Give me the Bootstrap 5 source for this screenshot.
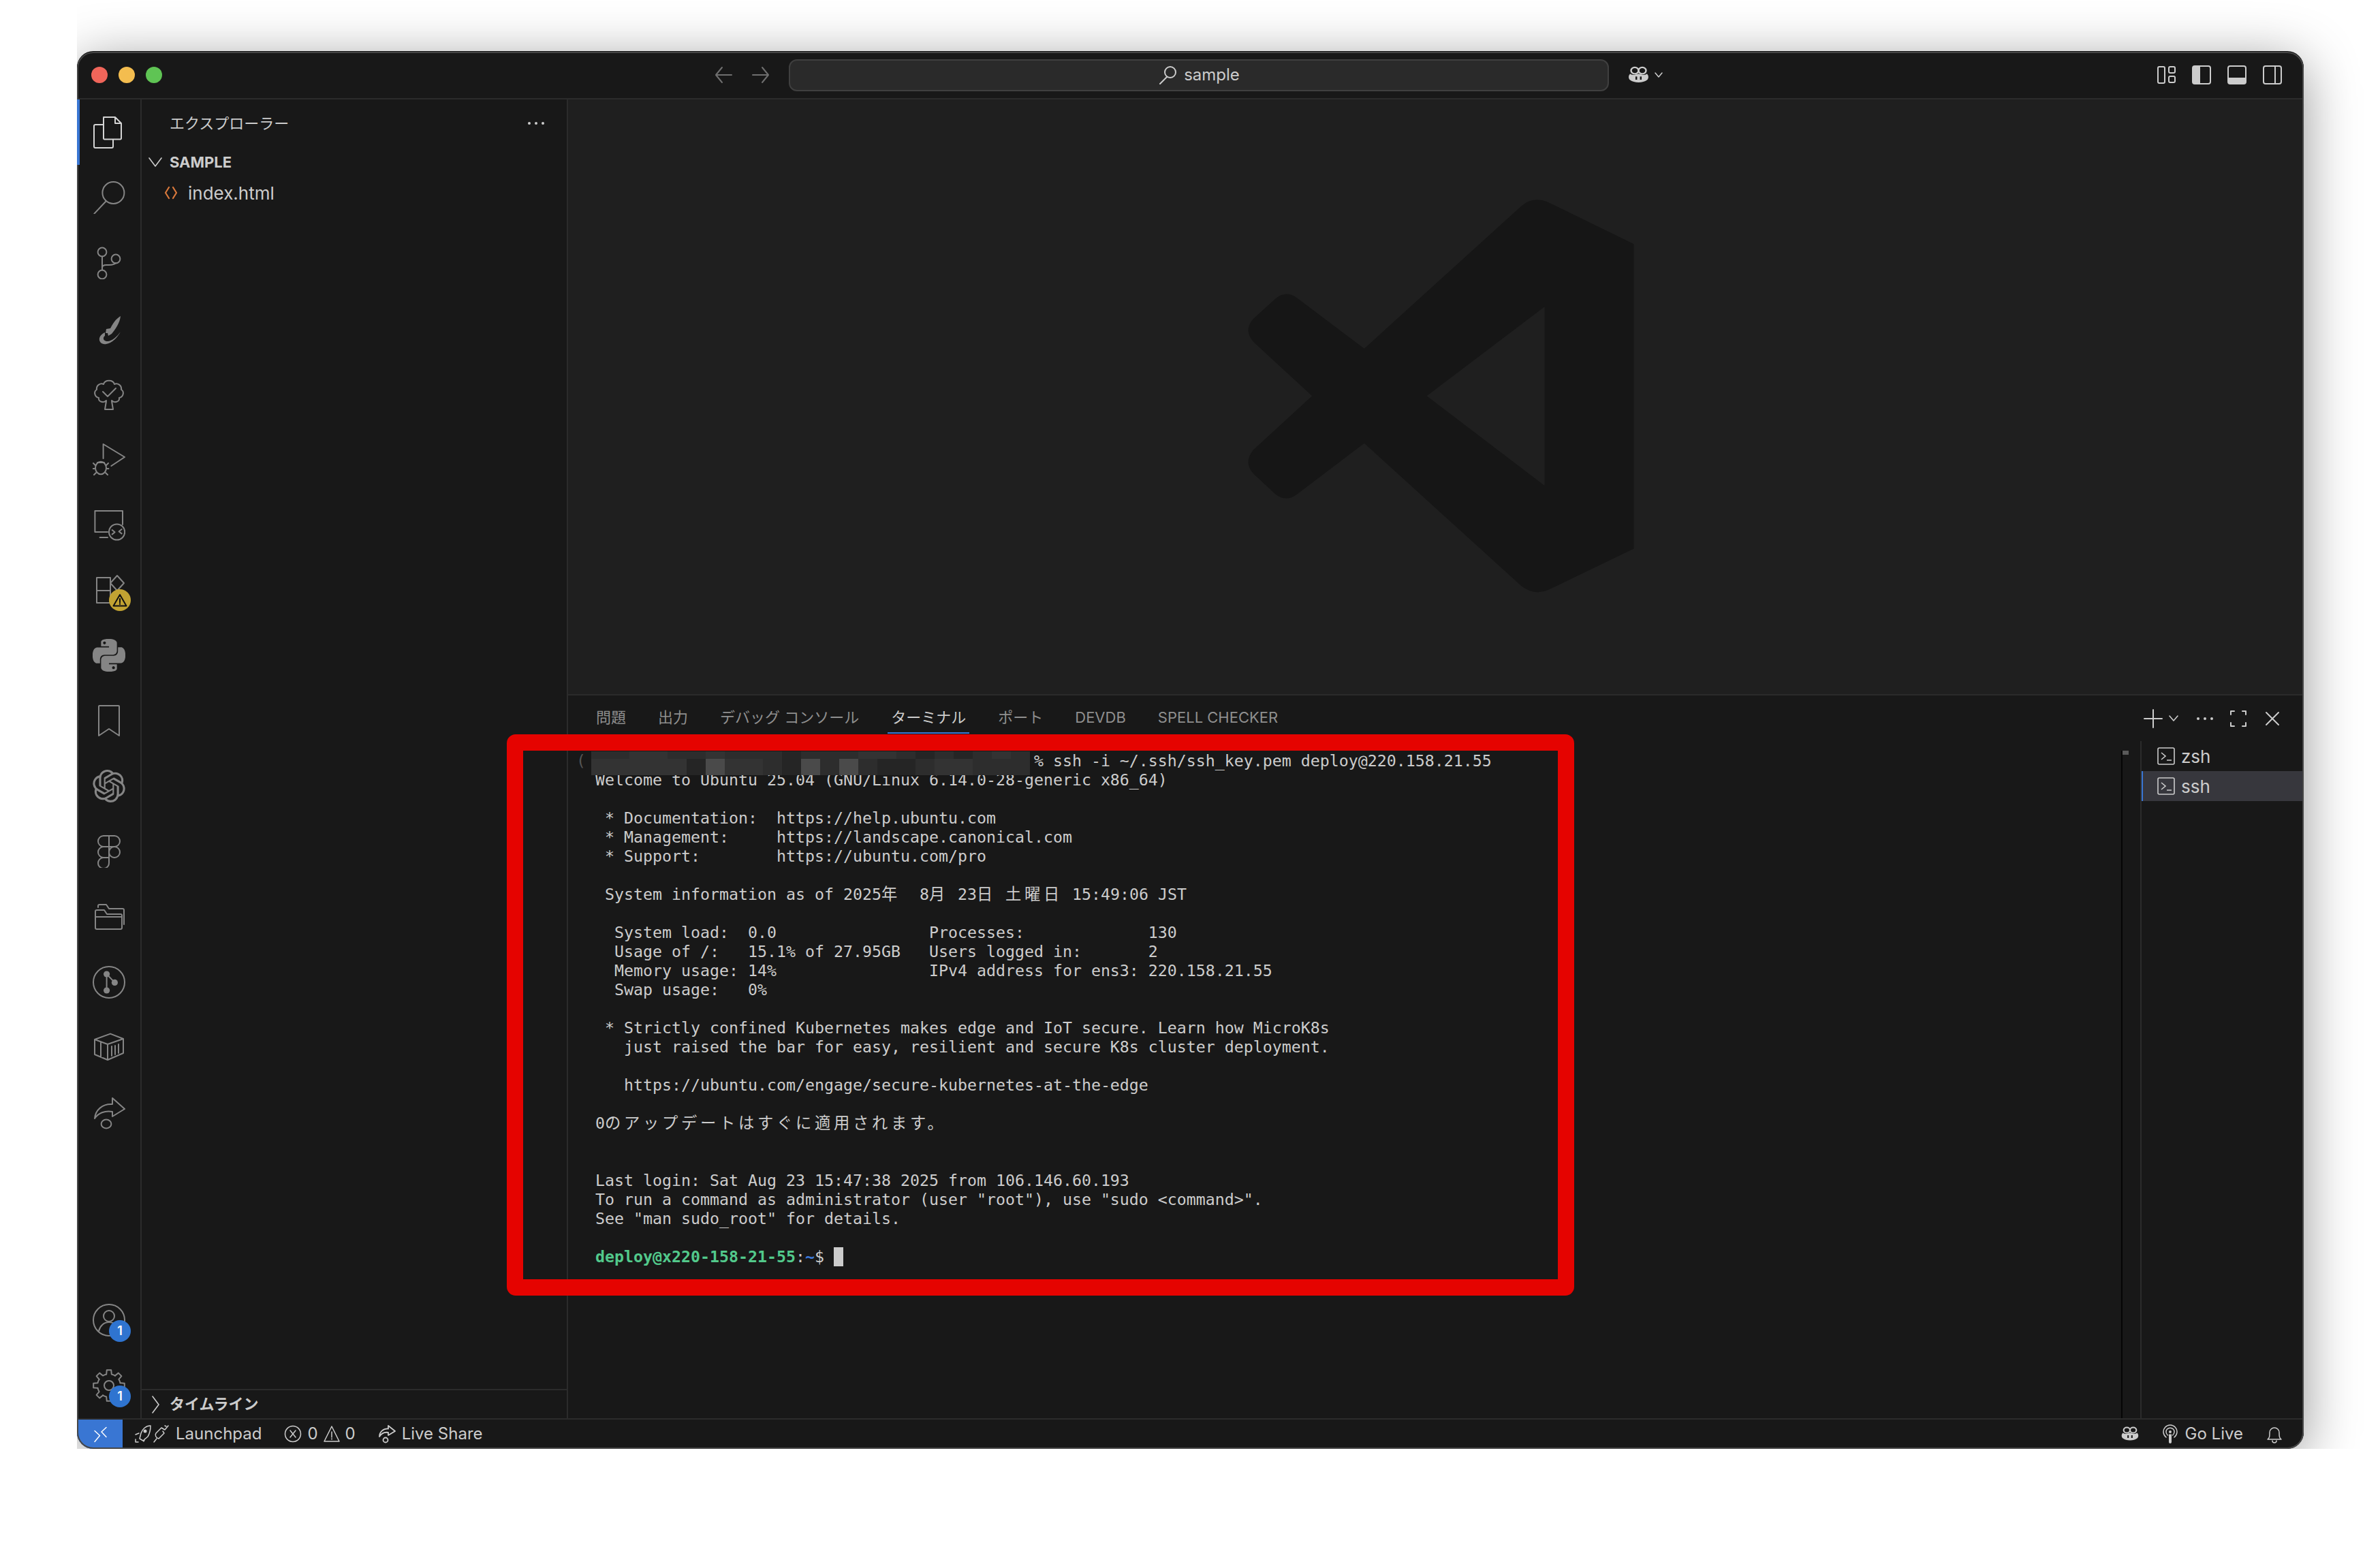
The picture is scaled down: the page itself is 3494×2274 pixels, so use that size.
<!DOCTYPE html>
<html lang="ja">
<head>
<meta charset="utf-8">
<title>sample - Visual Studio Code</title>
<link rel="stylesheet" href="https://cdn.jsdelivr.net/npm/bootstrap@5.3.0/dist/css/bootstrap.min.css">
<style>
body{margin:0;background:#fff;width:3494px;height:2274px;overflow:hidden;font-family:Inter,"Noto Sans CJK JP",sans-serif;color:#ccc;}
.shot{margin-left:113px;height:2127px;padding-top:76px;overflow:hidden;}
.vswin{width:3269px;height:2051px;border-radius:24px;overflow:hidden;background:#181818;box-shadow:0 -1px 0 #111,0 14px 80px rgba(0,0,0,.42);}
.vswin::after{content:"";position:absolute;inset:0;border:2px solid #464646;border-radius:24px;pointer-events:none;z-index:1;}
.ic{fill:none;stroke:currentColor;stroke-width:1;stroke-linejoin:round;stroke-linecap:round;flex:none;display:block;}
.fillic{fill:currentColor;stroke:none;}
.shrink-h{min-height:0}
.shrink-w{min-width:0}
.file-ic{color:#d9793c}
.titlebar{height:70px;border-bottom:2px solid #2b2b2b;flex:none;}
.tb-left{width:1045px;padding-left:21px;}
.tdot{width:24px;height:24px;border-radius:50%;}
.dot-r{background:#f0655a}.dot-y{background:#f4bd4f}.dot-g{background:#5fc454}
.dots{gap:16px}
.nav-arrows{gap:27px;margin-right:27px;color:#6f6f6f}
.searchbox{width:1204px;height:47px;background:#2a2a2a;border:2px solid #3f3f3f;border-radius:12px;font-size:24px;gap:10px;color:#ccc;}
.tb-right{padding:0 32px 0 27px;}
.rt-icons{gap:24px}
.copilot-wrap{gap:6px;color:#ccc}
.activity{width:95px;border-right:2px solid #2b2b2b;color:#858585;flex:none;}
.act-item{height:96px;width:93px;}
.act-active{color:#d4d4d4;}
.act-active::before{content:"";position:absolute;left:0;top:0;bottom:0;width:4px;background:#3976d3;z-index:2;}
.act-badge{position:absolute;left:47px;top:48px;width:32px;height:32px;border-radius:50%;background:#2f74d0;color:#fff;font-size:18px;font-weight:600;line-height:1;}
.act-warn{background:#c2a332;top:47px;color:#111;}
.sidebar{width:626px;border-right:2px solid #2b2b2b;flex:none;}
.side-head{height:70px;padding-left:41px;padding-right:32px;font-size:22px;}
.side-row{height:44px;font-size:26px;}
.side-sec{font-size:22px;font-weight:700;padding-left:10px;gap:11px;}
.side-file{padding-left:33px;gap:15px;margin-top:1px;}
.side-time{height:43px;border-top:2px solid #2b2b2b;font-size:22px;font-weight:700;padding-left:14px;gap:13px;}
.editor-area{height:875px;background:#1f1f1f;border-bottom:2px solid #2b2b2b;padding:0 0 6px 6px;flex:none;}
.panel-head{height:67px;padding:8px 32px 0 41px;flex:none;}
.ptabs{gap:47px;font-size:22px;color:#8f8f8f;}
.ptab{height:48px;margin:0 -5px;padding:2px 5px 0;border-bottom:2px solid transparent;}
.ptab-on{color:#ccc;border-bottom-color:#3976d3;}
.pacts{gap:22px;color:#ccc;margin-top:-8px}
.pact-chev{margin-left:-14px}
.pact-dots{margin-left:3px}
.term{margin-top:14px;border-right:2px solid #050505;min-width:0;}
.term-pre{padding:1px 0 0 40px;font-family:"DejaVu Sans Mono",monospace;font-size:23.25px;line-height:28px;color:#ccc;overflow:hidden;height:100%;}
.tln{height:28px;white-space:pre;}
.term-cjk{font-family:"Noto Sans CJK JP",sans-serif;letter-spacing:4.7px;line-height:0;font-size:23.3px;}
.term-green{color:#52c98b;font-weight:700}
.term-blue{color:#3b78d8;font-weight:700}
.term-cur{display:inline-block;width:14px;height:28px;background:#ccc;vertical-align:top;}
.term-lead{display:inline-block;width:28px;margin-left:-28px;color:#555;}
.term-mask{position:absolute;left:34px;top:1px;display:block;}
.term-rule{position:absolute;right:-11px;top:0;width:9px;height:6px;background:#5a5a5a;}
.ruler-gap{width:26px;flex:none;}
.tlist{width:240px;border-left:2px solid #2b2b2b;flex:none;font-size:26px;}
.tl-row{height:44px;padding-left:23px;gap:9px;}
.tl-on{background:#37373d;box-shadow:inset 2px 0 0 #3976d3;}
.statusbar{height:45px;border-top:2px solid #2b2b2b;padding-bottom:2px;font-size:24px;flex:none;}
.st-remote{width:67px;align-self:stretch;margin-bottom:-2px;background:#3976d3;color:#fff;}
.st-left{gap:33px;padding-left:17px}
.st-item{gap:9px}
.st-counts{gap:8px}
.st-golive{gap:11px}
.st-right{gap:34px;padding-right:31px}
.redframe{position:absolute;left:631px;top:1002px;width:1567px;height:824px;border:24px solid #e50300;border-radius:13px;}
</style>
</head>
<body>
<svg width="0" height="0" class="position-absolute">
  <defs>
    <symbol id="cop" viewBox="0 0 24 24" preserveAspectRatio="none">
      <circle cx="8" cy="6.500" r="4" fill="none" stroke="currentColor" stroke-width="1.800"/>
      <circle cx="16" cy="6.500" r="4" fill="none" stroke="currentColor" stroke-width="1.800"/>
      <path fill="currentColor" d="M3 10.500C1 13 1 16.500 3 18.500 7 22.500 17 22.500 21 18.500 23 16.500 23 13 21 10.500 19 12.500 16 12 12 10.500 8 12 5 12.500 3 10.500Z"/>
      <rect x="8.700" y="14" width="1.800" height="4" fill="#181818"/>
      <rect x="13.500" y="14" width="1.800" height="4" fill="#181818"/>
    </symbol>
    <symbol id="tprompt" viewBox="0 0 26 26">
      <rect x="1" y="1" width="24" height="24" rx="2" fill="none" stroke="currentColor" stroke-width="1.600"/>
      <path d="M6 8l6 5-6 5M14 19h7" fill="none" stroke="currentColor" stroke-width="1.600"/>
    </symbol>
    <path id="gt" d="M-1.91-8.28L-1.6-11.39H1.6L1.91-8.28A8.5 8.5 0 0 1 4.5-7.21"/>
  </defs>
</svg>
<div class="shot">
<div class="vswin position-relative d-flex flex-column">

  <div class="titlebar d-flex align-items-center">
    <div class="tb-left d-flex align-items-center">
      <div class="dots d-flex"><span class="tdot dot-r"></span><span class="tdot dot-y"></span><span class="tdot dot-g"></span></div>
      <div class="nav-arrows d-flex ms-auto">
        <svg class="ic" width="28" height="28" viewBox="0 0 28 28"><path stroke-width="2" d="M26 14H3M12 3L3 14l9 11"/></svg>
        <svg class="ic" width="28" height="28" viewBox="0 0 28 28"><path stroke-width="2" d="M2 14h23M16 3l9 11-9 11"/></svg>
      </div>
    </div>
    <div class="searchbox d-flex align-items-center justify-content-center">
      <svg class="ic" width="28" height="28" viewBox="0 0 28 28"><circle stroke-width="2" cx="18" cy="10" r="8"/><path stroke-width="2" d="M13 17L3 27"/></svg>
      <span>sample</span>
    </div>
    <div class="tb-right flex-grow-1 d-flex align-items-center">
      <div class="copilot-wrap d-flex align-items-center">
        <svg width="33" height="28"><use href="#cop"/></svg>
        <svg class="ic" width="14" height="10" viewBox="0 0 14 10"><path stroke-width="1.500" d="M2 2l5 6 5-6"/></svg>
      </div>
      <div class="rt-icons d-flex ms-auto">
        <svg class="ic" width="28" height="28" viewBox="-1 0 28 28"><g stroke-width="2"><rect x="1" y="2" width="10" height="24" rx="2"/><rect x="17" y="2" width="9" height="9" rx="2"/><rect x="17" y="16" width="9" height="9" rx="2"/></g></svg>
        <svg class="ic" width="28" height="28" viewBox="0 0 28 28"><rect stroke-width="2" x="1" y="1" width="26" height="26" rx="3"/><path class="fillic" d="M1 4a3 3 0 0 1 3-3h8v26H4a3 3 0 0 1-3-3z"/></svg>
        <svg class="ic" width="28" height="28" viewBox="0 0 28 28"><rect stroke-width="2" x="1" y="1" width="26" height="26" rx="3"/><path class="fillic" d="M1 18h26v6a3 3 0 0 1-3 3H4a3 3 0 0 1-3-3z"/></svg>
        <svg class="ic" width="28" height="28" viewBox="0 0 28 28"><rect stroke-width="2" x="1" y="1" width="26" height="26" rx="3"/><path stroke-width="2" d="M18 1v26"/></svg>
      </div>
    </div>
  </div>

  <div class="d-flex flex-grow-1 shrink-h">
    <nav class="activity d-flex flex-column justify-content-between">
      <div>
        <div class="act-item act-active position-relative d-flex align-items-center justify-content-center">
          <svg class="ic" width="48" height="48" viewBox="0 0 24 24"><path d="M8 1h8.500L21 5.500V16.500a.7.7 0 0 1-.7.7H8.700a.7.7 0 0 1-.7-.7V1.700A.7.7 0 0 1 8.700 1zM16.500 1v4.500H21M8 6.500H2a1 1 0 0 0-1 1V22.500a1 1 0 0 0 1 1H14a1 1 0 0 0 1-1V17.200"/></svg>
        </div>
        <div class="act-item d-flex align-items-center justify-content-center">
          <svg class="ic" width="48" height="48" viewBox="0 0 24 24"><circle cx="15.200" cy="8.500" r="8"/><path d="M9.500 15L1.200 23.800"/></svg>
        </div>
        <div class="act-item d-flex align-items-center justify-content-center">
          <svg class="ic" width="48" height="48" viewBox="0 0 24 24"><circle cx="7" cy="4" r="3.200"/><circle cx="17" cy="9" r="3.200"/><circle cx="7" cy="20.500" r="3.200"/><path d="M7 7.200V17.300M7 15.500c0-1.500 1-2 3-2h2c3 0 5-1 5-1.500"/></svg>
        </div>
        <div class="act-item d-flex align-items-center justify-content-center">
          <svg class="ic fillic" width="48" height="48" viewBox="0 0 24 24"><path d="M20.500 3C17 5 14.500 9 13 12L10 12.500 9.500 15.500 11 15.500 11.500 17.500 14 16C16.500 13 20 8 20.500 3Z"/><path d="M9 15C2.500 18 4.500 24.500 10 23.500 14 23 18 19 20.500 14.500 18 18 14 21.500 11 21.500 8 21.500 7 19 9 17.500Z"/></svg>
        </div>
        <div class="act-item d-flex align-items-center justify-content-center">
          <svg class="ic" width="48" height="48" viewBox="0 0 24 24"><path d="M10 17.500L9 23.500H15L14 17.500M10 17C8 19 4 18 4.500 15 1.500 14.500.5 10.500 3 9 2.500 5.500 6 4 8 5 9 1.500 15 1.500 16 5 18 4 21.500 5.500 21 9 23.500 10.500 22.500 14.500 19.500 15 20 18 16 19 14 17M7.500 10.500L11 14 17 8"/></svg>
        </div>
        <div class="act-item d-flex align-items-center justify-content-center">
          <svg class="ic" width="48" height="48" viewBox="0 0 24 24"><path d="M7.800 11.500V1L23.500 10.500 13.700 17"/><ellipse cx="6" cy="18.500" rx="4" ry="4.600"/><path d="M2 16.500L.5 15M10 16.500L11.500 15M1.500 19H.3M10.500 19H11.700M2.500 22L1 23.500M9.500 22L11 23.500M3.500 14.500h5"/></svg>
        </div>
        <div class="act-item d-flex align-items-center justify-content-center">
          <svg class="ic" width="48" height="48" viewBox="0 0 24 24"><path d="M22 12V2H1.700V17.500H11M5.300 21.500H11"/><circle cx="17.800" cy="17.500" r="5.800"/><path d="M14.300 16l2 1.600-2 1.600M21.300 15.500l-2 1.600 2 1.600"/></svg>
        </div>
        <div class="act-item position-relative d-flex align-items-center justify-content-center">
          <svg class="ic" width="48" height="48" viewBox="0 0 24 24"><path d="M3 3H13V21.500H3ZM3 12.500H13M13 7l5-5.500L23 7l-5 5.500Z"/></svg>
          <span class="act-badge act-warn d-flex align-items-center justify-content-center"><svg class="ic" width="22" height="20" viewBox="0 0 22 20"><path stroke-width="2" d="M11 2L1.500 18.500h19zM11 8v5.500M11 15.500v.5"/></svg></span>
        </div>
        <div class="act-item d-flex align-items-center justify-content-center">
          <svg class="ic fillic" width="48" height="48" viewBox="0 0 24 24"><path d="M14.25.18l.9.2.73.26.59.3.45.32.34.34.25.34.16.33.1.3.04.26.02.2-.01.13V8.5l-.05.63-.13.55-.21.46-.26.38-.3.31-.33.25-.35.19-.35.14-.33.1-.3.07-.26.04-.21.02H8.77l-.69.05-.59.14-.5.22-.41.27-.33.32-.27.35-.2.36-.15.37-.1.35-.07.32-.04.27-.02.21v3.06H3.17l-.21-.03-.28-.07-.32-.12-.35-.18-.36-.26-.36-.36-.35-.46-.32-.59-.28-.73-.21-.88-.14-1.05-.05-1.23.06-1.22.16-1.04.24-.87.32-.71.36-.57.4-.44.42-.33.42-.24.4-.16.36-.1.32-.05.24-.01h.16l.06.01h8.16v-.83H6.18l-.01-2.75-.02-.37.05-.34.11-.31.17-.28.25-.26.31-.23.38-.2.44-.18.51-.15.58-.12.64-.1.71-.06.77-.04.84-.02 1.27.05zm-6.3 1.98l-.23.33-.08.41.08.41.23.34.33.22.41.09.41-.09.33-.22.23-.34.08-.41-.08-.41-.23-.33-.33-.22-.41-.09-.41.09zm13.09 3.95l.28.06.32.12.35.18.36.27.36.35.35.47.32.59.28.73.21.88.14 1.04.05 1.23-.06 1.23-.16 1.04-.24.86-.32.71-.36.57-.4.45-.42.33-.42.24-.4.16-.36.09-.32.05-.24.02-.16-.01h-8.22v.82h5.84l.01 2.76.02.36-.05.34-.11.31-.17.29-.25.25-.31.24-.38.2-.44.17-.51.15-.58.13-.64.09-.71.07-.77.04-.84.01-1.27-.04-1.07-.14-.9-.2-.73-.25-.59-.3-.45-.33-.34-.34-.25-.34-.16-.33-.1-.3-.04-.25-.02-.2.01-.13v-5.34l.05-.64.13-.54.21-.46.26-.38.3-.32.33-.24.35-.2.35-.14.33-.1.3-.06.26-.04.21-.02.13-.01h5.84l.69-.05.59-.14.5-.21.41-.28.33-.32.27-.35.2-.36.15-.36.1-.35.07-.32.04-.28.02-.21V6.07h2.09l.14.01zm-6.47 14.25l-.23.33-.08.41.08.41.23.33.33.23.41.08.41-.08.33-.23.23-.33.08-.41-.08-.41-.23-.33-.33-.23-.41-.08-.41.08z"/></svg>
        </div>
        <div class="act-item d-flex align-items-center justify-content-center">
          <svg class="ic" width="48" height="48" viewBox="0 0 24 24"><path d="M5 1H19a.5.500 0 0 1 .5.5V23L12 18 4.500 23V1.500A.5.500 0 0 1 5 1Z"/></svg>
        </div>
        <div class="act-item d-flex align-items-center justify-content-center">
          <svg class="ic fillic" width="48" height="48" viewBox="0 0 24 24"><path d="M22.2819 9.8211a5.9847 5.9847 0 0 0-.5157-4.9108 6.0462 6.0462 0 0 0-6.5098-2.9A6.0651 6.0651 0 0 0 4.9807 4.1818a5.9847 5.9847 0 0 0-3.9977 2.9 6.0462 6.0462 0 0 0 .7427 7.0966 5.98 5.98 0 0 0 .511 4.9107 6.051 6.051 0 0 0 6.5146 2.9001A5.9847 5.9847 0 0 0 13.2599 24a6.0557 6.0557 0 0 0 5.7718-4.2058 5.9894 5.9894 0 0 0 3.9977-2.9001 6.0557 6.0557 0 0 0-.7475-7.0729zm-9.022 12.6081a4.4755 4.4755 0 0 1-2.8764-1.0408l.1419-.0804 4.7783-2.7582a.7948.7948 0 0 0 .3927-.6813v-6.7369l2.02 1.1686a.071.071 0 0 1 .038.052v5.5826a4.504 4.504 0 0 1-4.4945 4.4944zm-9.6607-4.1254a4.4708 4.4708 0 0 1-.5346-3.0137l.142.0852 4.783 2.7582a.7712.7712 0 0 0 .7806 0l5.8428-3.3685v2.3324a.0804.0804 0 0 1-.0332.0615L9.74 19.9502a4.4992 4.4992 0 0 1-6.1408-1.6464zM2.3408 7.8956a4.485 4.485 0 0 1 2.3655-1.9728V11.6a.7664.7664 0 0 0 .3879.6765l5.8144 3.3543-2.0201 1.1685a.0757.0757 0 0 1-.071 0l-4.8303-2.7865A4.504 4.504 0 0 1 2.3408 7.872zm16.5963 3.8558L13.1038 8.364 15.1192 7.2a.0757.0757 0 0 1 .071 0l4.8303 2.7913a4.4944 4.4944 0 0 1-.6765 8.1042v-5.6772a.79.79 0 0 0-.407-.667zm2.0107-3.0231l-.142-.0852-4.7735-2.7818a.7759.7759 0 0 0-.7854 0L9.409 9.2297V6.8974a.0662.0662 0 0 1 .0284-.0615l4.8303-2.7866a4.4992 4.4992 0 0 1 6.6802 4.66zM8.3065 12.863l-2.02-1.1638a.0804.0804 0 0 1-.038-.0567V6.0742a4.4992 4.4992 0 0 1 7.3757-3.4537l-.142.0805L8.704 5.459a.7948.7948 0 0 0-.3927.6813zm1.0976-2.3654l2.602-1.4998 2.6069 1.4998v2.9994l-2.5974 1.4997-2.6067-1.4997Z"/></svg>
        </div>
        <div class="act-item d-flex align-items-center justify-content-center">
          <svg class="ic" width="48" height="48" viewBox="0 0 24 24"><path d="M12 .5H8a4 4 0 0 0 0 8H12ZM12 .5H16a4 4 0 0 1 0 8H12ZM12 8.500H8a4 4 0 0 0 0 8H12ZM12 16.500H8a4 4 0 1 0 4 4Z"/><circle cx="16" cy="12.500" r="4"/></svg>
        </div>
        <div class="act-item d-flex align-items-center justify-content-center">
          <svg class="ic" width="48" height="48" viewBox="0 0 24 24"><path d="M4 5V4a1 1 0 0 1 1-1H10L12 6H22a1 1 0 0 1 1 1V17.500M2 12H21M2 19.500V8a1 1 0 0 1 1-1H8.500L10.500 10H20.500a1 1 0 0 1 1 1V20a1 1 0 0 1-1 1H3a1 1 0 0 1-1-1Z"/></svg>
        </div>
        <div class="act-item d-flex align-items-center justify-content-center">
          <svg class="ic" width="48" height="48" viewBox="0 0 24 24"><circle cx="12" cy="12" r="11.500"/><path d="M10.300 6V18M10.300 6L16.200 12.200"/><g class="fillic"><circle cx="10.300" cy="6" r="2.300"/><circle cx="16.200" cy="12.200" r="2.300"/><circle cx="10.300" cy="18" r="2.300"/></g></svg>
        </div>
        <div class="act-item d-flex align-items-center justify-content-center">
          <svg class="ic" width="48" height="48" viewBox="0 0 24 24"><path d="M1.500 6L13 1.800 22.500 5.500V16L11 21 1.500 17ZM1.500 6L11 9.500 22.500 5.500M11 9.500V21M6 8V19M14 11V18M16.500 10.500V17M19 9.500V16"/></svg>
        </div>
        <div class="act-item d-flex align-items-center justify-content-center">
          <svg class="ic" width="48" height="48" viewBox="0 0 24 24"><path d="M14.500 1L23.500 9 14.500 14.500V11C9 10 4 12 1.500 16 2 10 7 5 14.500 5.500Z"/><ellipse cx="10" cy="20" rx="3.700" ry="3.200"/></svg>
        </div>
      </div>
      <div>
        <div class="act-item position-relative d-flex align-items-center justify-content-center">
          <svg class="ic" width="48" height="48" viewBox="0 0 24 24"><circle cx="12" cy="12" r="11.500"/><circle cx="12" cy="9" r="4"/><path d="M4.500 20c1-4 4-6.500 7.500-6.500s6.500 2.500 7.500 6.500"/></svg>
          <span class="act-badge d-flex align-items-center justify-content-center">1</span>
        </div>
        <div class="act-item position-relative d-flex align-items-center justify-content-center">
          <svg class="ic" width="48" height="48" viewBox="-12 -12 24 24"><use href="#gt"/><use href="#gt" transform="rotate(45)"/><use href="#gt" transform="rotate(90)"/><use href="#gt" transform="rotate(135)"/><use href="#gt" transform="rotate(180)"/><use href="#gt" transform="rotate(225)"/><use href="#gt" transform="rotate(270)"/><use href="#gt" transform="rotate(315)"/><circle r="3.500"/></svg>
          <span class="act-badge d-flex align-items-center justify-content-center">1</span>
        </div>
      </div>
    </nav>

    <aside class="sidebar d-flex flex-column">
      <div class="side-head d-flex align-items-center justify-content-between">
        <span>エクスプローラー</span>
        <svg class="ic fillic" width="26" height="6" viewBox="0 0 26 6"><circle cx="3" cy="3" r="2"/><circle cx="13" cy="3" r="2"/><circle cx="23" cy="3" r="2"/></svg>
      </div>
      <div class="side-row side-sec d-flex align-items-center">
        <svg class="ic" width="20" height="18" viewBox="0 0 20 18"><path stroke-width="1.600" d="M1 3l9 12 9-12"/></svg>
        <span>SAMPLE</span>
      </div>
      <div class="side-row side-file d-flex align-items-center">
        <svg class="ic file-ic" width="20" height="24" viewBox="0 0 20 24"><path stroke-width="2.200" d="M7 4l-5 8 5 8M13 4l5 8-5 8"/></svg>
        <span>index.html</span>
      </div>
      <div class="mt-auto side-time d-flex align-items-center">
        <svg class="ic" width="14" height="28" viewBox="0 0 14 28"><path stroke-width="1.600" d="M2 2l9 12-9 12"/></svg>
        <span>タイムライン</span>
      </div>
    </aside>

    <main class="flex-grow-1 d-flex flex-column shrink-w">
      <div class="editor-area d-flex align-items-center justify-content-center">
        <svg width="660" height="660" viewBox="0 0 1568 1568"><path fill="#161616" fill-rule="evenodd" d="M1130 103Q1150 103 1170 112L1467 257V1320L1170 1463Q1120 1485 1075 1450L527 952 292 1130Q255 1158 218 1130L140 1058Q105 1018 140 975L345 787 140 598Q105 558 140 518L218 447Q255 418 292 445L527 622 1075 125Q1100 103 1130 103ZM1156 476L745 787 1156 1100Z"/></svg>
      </div>
      <div class="panel-head d-flex align-items-start">
        <div class="ptabs d-flex align-items-center">
          <span class="ptab d-flex align-items-center">問題</span>
          <span class="ptab d-flex align-items-center">出力</span>
          <span class="ptab d-flex align-items-center">デバッグ コンソール</span>
          <span class="ptab ptab-on d-flex align-items-center">ターミナル</span>
          <span class="ptab d-flex align-items-center">ポート</span>
          <span class="ptab d-flex align-items-center">DEVDB</span>
          <span class="ptab d-flex align-items-center">SPELL CHECKER</span>
        </div>
        <div class="pacts ms-auto d-flex align-items-center align-self-center">
          <svg class="ic" width="28" height="28" viewBox="0 0 28 28"><path stroke-width="2" d="M14 1v26M1 14h26"/></svg>
          <svg class="ic pact-chev" width="16" height="12" viewBox="0 0 16 12"><path stroke-width="1.600" d="M2 2l6 7 6-7"/></svg>
          <svg class="ic fillic pact-dots" width="26" height="6" viewBox="0 0 26 6"><circle cx="3" cy="3" r="2"/><circle cx="13" cy="3" r="2"/><circle cx="23" cy="3" r="2"/></svg>
          <svg class="ic" width="28" height="28" viewBox="0 0 28 28"><path stroke-width="2" d="M8 3H3V8M20 3h5V8M8 25H3V20M20 25h5V20"/></svg>
          <svg class="ic" width="28" height="28" viewBox="0 0 28 28"><path stroke-width="2" d="M5 5L23 23M23 5L5 23"/></svg>
        </div>
      </div>
      <div class="d-flex flex-grow-1 shrink-h">
        <div class="term flex-grow-1 position-relative">
          <div class="term-pre">
<div class="tln"><span class="term-lead">(</span>                                              % ssh -i ~/.ssh/ssh_key.pem deploy@220.158.21.55</div>
<div class="tln">Welcome to Ubuntu 25.04 (GNU/Linux 6.14.0-28-generic x86_64)</div>
<div class="tln"></div>
<div class="tln"> * Documentation:  https://help.ubuntu.com</div>
<div class="tln"> * Management:     https://landscape.canonical.com</div>
<div class="tln"> * Support:        https://ubuntu.com/pro</div>
<div class="tln"></div>
<div class="tln"> System information as of 2025<span class="term-cjk">年</span>  8<span class="term-cjk">月</span> 23<span class="term-cjk">日</span> <span class="term-cjk">土曜日</span> 15:49:06 JST</div>
<div class="tln"></div>
<div class="tln">  System load:  0.0                Processes:             130</div>
<div class="tln">  Usage of /:   15.1% of 27.95GB   Users logged in:       2</div>
<div class="tln">  Memory usage: 14%                IPv4 address for ens3: 220.158.21.55</div>
<div class="tln">  Swap usage:   0%</div>
<div class="tln"></div>
<div class="tln"> * Strictly confined Kubernetes makes edge and IoT secure. Learn how MicroK8s</div>
<div class="tln">   just raised the bar for easy, resilient and secure K8s cluster deployment.</div>
<div class="tln"></div>
<div class="tln">   https://ubuntu.com/engage/secure-kubernetes-at-the-edge</div>
<div class="tln"></div>
<div class="tln">0<span class="term-cjk">のアップデートはすぐに適用されます。</span></div>
<div class="tln"></div>
<div class="tln"></div>
<div class="tln">Last login: Sat Aug 23 15:47:38 2025 from 106.146.60.193</div>
<div class="tln">To run a command as administrator (user "root"), use "sudo &lt;command&gt;".</div>
<div class="tln">See "man sudo_root" for details.</div>
<div class="tln"></div>
<div class="tln"><span class="term-green">deploy@x220-158-21-55</span>:<span class="term-blue">~</span>$ <span class="term-cur"></span></div>
          </div>
          <svg class="term-mask" width="644" height="35" viewBox="0 0 23 2.5" preserveAspectRatio="none" shape-rendering="crispEdges" aria-hidden="true">
            <rect width="23" height="2.500" fill="#2d2d2d"/>
            <g fill="#333"><rect x="2" width="2" height=".8"/><rect x="6" width="1" height=".8"/><rect x="14" width="2" height=".8"/><rect x="21" width="1" height=".8"/><rect x="0" y=".8" width="5" height="1.700"/><rect x="7" y=".8" width="2" height="1.700"/><rect x="13" y=".8" width="1" height="1.700"/><rect x="18" y=".8" width="2" height="1.700"/></g>
            <g fill="#252525"><rect x="10" width="1" height=".8"/><rect x="17" width="1" height=".8"/><rect x="19" width="1" height=".8"/><rect x="5" y=".8" width="1" height="1.700"/><rect x="10" y=".8" width="1" height="1.700"/><rect x="15" y=".8" width="2" height="1.700"/></g>
            <g fill="#4a4a4a"><rect x="6" y=".8" width="1" height="1.700"/><rect x="11" y=".8" width="1" height="1.700"/><rect x="13" y=".8" width="1" height="1.700"/></g>
          </svg>
          <span class="term-rule"></span>
        </div>
        <div class="ruler-gap"></div>
        <div class="tlist">
          <div class="tl-row d-flex align-items-center"><svg width="26" height="26"><use href="#tprompt"/></svg><span>zsh</span></div>
          <div class="tl-row tl-on d-flex align-items-center"><svg width="26" height="26"><use href="#tprompt"/></svg><span>ssh</span></div>
        </div>
      </div>
    </main>
  </div>

  <footer class="statusbar d-flex align-items-center">
    <div class="st-remote d-flex align-items-center justify-content-center">
      <svg class="ic" width="24" height="24" viewBox="0 0 24 24"><path stroke-width="1.500" d="M4 6.500L11.500 13.500 4 22.500M21 1.500L14 8 21 15.500"/></svg>
    </div>
    <div class="st-left d-flex align-items-center">
      <div class="st-item d-flex align-items-center">
        <svg class="ic" width="52" height="28" viewBox="0 0 52 28"><path stroke-width="1.500" d="M24 2c-7 0-12 5-14 11l-2 8 5 3 7-6c3-5 4-11 4-16zM2 15l5-2M14 25l2-4M2 26v-4M2 26h4"/><circle class="fillic" cx="16" cy="10" r="2.500"/><path stroke-width="1.500" d="M50 2l-5 6-5-3-8 8c-2 3 0 7 4 8l8-8-2-3M29 26l4-5M45 2l2 1"/></svg>
        <span>Launchpad</span>
      </div>
      <div class="st-counts d-flex align-items-center">
        <svg class="ic" width="26" height="26" viewBox="0 0 26 26"><circle stroke-width="1.500" cx="13" cy="13" r="11.500"/><path stroke-width="1.500" d="M9 8l8 10M17 8L9 18"/></svg>
        <span>0</span>
        <svg class="ic" width="24" height="26" viewBox="0 0 24 26"><path stroke-width="1.500" d="M12 2L1 24h22zM12 10v8M12 20v1"/></svg>
        <span>0</span>
      </div>
      <div class="st-item d-flex align-items-center">
        <svg class="ic" width="26" height="28" viewBox="0 0 26 28"><path stroke-width="1.800" d="M15 2l10 8-10 6v-4C9 11 5 13 2 18 2 11 8 6 15 6.500z"/><ellipse stroke-width="1.800" cx="11" cy="23" rx="3.500" ry="3.500"/></svg>
        <span>Live Share</span>
      </div>
    </div>
    <div class="st-right ms-auto d-flex align-items-center">
      <svg width="28" height="24"><use href="#cop"/></svg>
      <div class="st-golive d-flex align-items-center">
        <svg class="ic" width="22" height="28" viewBox="0 0 22 28"><path stroke-width="1.500" d="M5 19a10 10 0 1 1 12 0M7.500 16a6 6 0 1 1 7 0"/><circle class="fillic" cx="11" cy="11" r="2"/><path class="fillic" d="M9 14.500h4V26a2 2 0 0 1-4 0z"/></svg>
        <span>Go Live</span>
      </div>
      <svg class="ic" width="24" height="28" viewBox="0 0 24 28"><path stroke-width="1.500" d="M2 22c3-2 3-5 3-10a7 7 0 0 1 14 0c0 5 0 8 3 10zM9 24a3 3 0 0 0 6 0"/></svg>
    </div>
  </footer>

  <div class="redframe"></div>
</div>
</div>
<script src="https://cdn.jsdelivr.net/npm/bootstrap@5.3.0/dist/js/bootstrap.bundle.min.js"></script>
</body>
</html>
